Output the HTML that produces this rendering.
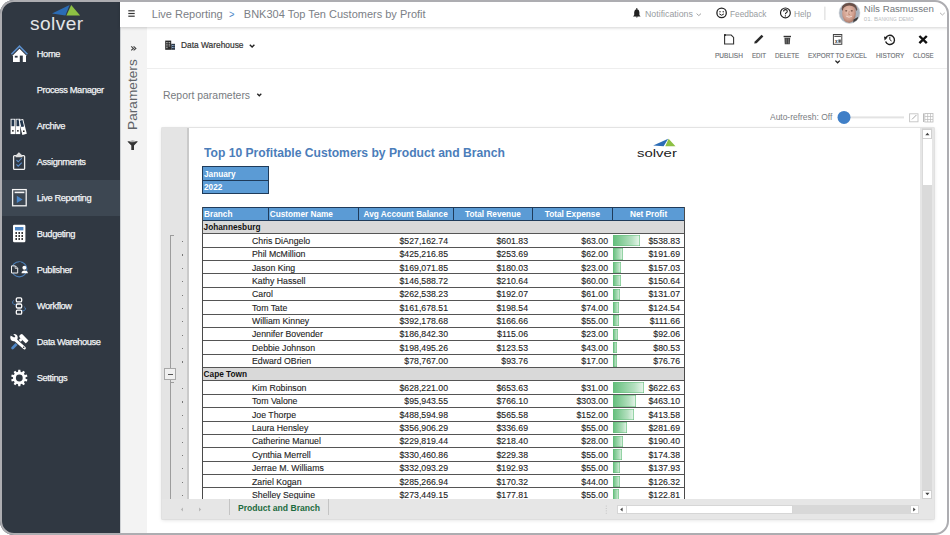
<!DOCTYPE html>
<html><head><meta charset="utf-8">
<style>
*{box-sizing:border-box;margin:0;padding:0}
html,body{width:950px;height:535px;overflow:hidden;background:#fff;font-family:"Liberation Sans",sans-serif}
.abs{position:absolute}
.t{position:absolute;white-space:nowrap}
#frame{position:absolute;left:0;top:0;width:949.3px;height:534.8px;border-radius:14px;overflow:hidden;background:#fff}
#bord{position:absolute;left:0;top:0;width:949.3px;height:534.8px;border:2.5px solid #adadb1;border-radius:14px;z-index:100}
#side{position:absolute;left:0;top:0;width:120px;height:535px;background:#303842}
.nav{position:absolute;left:0;width:120px;height:36px;color:#f2f4f6;font-size:9.3px;letter-spacing:-0.4px;-webkit-text-stroke:0.25px #f2f4f6}
.nav span{position:absolute;left:36.8px;top:13px;line-height:10px}
.nav svg{position:absolute;left:7px;top:8px}
#top{position:absolute;left:120px;top:0;width:830px;height:27px;background:#fff;box-shadow:0 1px 3px rgba(0,0,0,0.18);z-index:3}
#params{position:absolute;left:120px;top:25px;width:27px;height:510px;background:#f3f3f3}
#main{position:absolute;left:147px;top:25px;width:803px;height:510px;background:#fff}
</style></head><body>
<div id="frame">
 <div id="side">

  <svg class="abs" style="z-index:2;left:0;top:0" style="left:0;top:0" width="120" height="535" viewBox="0 0 120 535">
   <!-- logo -->
   <polygon points="52,13.6 69.6,5.1 65.4,15.4" fill="#2b6cb5"/>
   <polygon points="66.4,15.4 71.2,5.1 80.1,15.4" fill="#8dc043"/>
   <!-- home -->
   <polyline points="11.4,54.3 19.5,46.2 27.4,54.3" fill="none" stroke="#5b8ecb" stroke-width="1.6"/>
   <path d="M13,55.2 L19.5,48.8 L26,55.2 L26,62 L13,62Z" fill="#fff"/>
   <rect x="14.8" y="55.8" width="2.8" height="1.8" fill="#303842"/>
   <rect x="19.8" y="55.6" width="3" height="6.6" fill="#303842"/>
   <!-- archive -->
   <g>
    <rect x="10.6" y="118.8" width="4.6" height="15.3" fill="#fff"/>
    <rect x="15.6" y="118.8" width="4.6" height="15.3" fill="#fff"/>
    <rect x="11.5" y="119.6" width="2.8" height="6.6" fill="#22364d"/>
    <rect x="16.5" y="119.6" width="2.8" height="6.6" fill="#22364d"/>
    <circle cx="12.9" cy="130.8" r="0.85" fill="#111"/>
    <circle cx="17.9" cy="130.8" r="0.85" fill="#111"/>
    <g transform="rotate(-14 25 134)">
     <rect x="22.2" y="119" width="4.6" height="15.3" fill="#fff"/>
     <rect x="23.1" y="119.8" width="2.8" height="6.6" fill="#22364d"/>
     <circle cx="24.5" cy="131" r="0.85" fill="#111"/>
    </g>
   </g>
   <!-- assignments -->
   <rect x="13.6" y="155.6" width="11" height="13.8" rx="1" fill="none" stroke="#eee" stroke-width="1.3"/>
   <path d="M15.6,155.5 L18.9,152.3 L22.5,155.5 L22.5,157.2 L15.6,157.2Z" fill="#ddd"/>
   <polyline points="16.5,160 18.2,161.8 21.8,158.2" fill="none" stroke="#5b8ecb" stroke-width="1.1"/>
   <polyline points="16.5,164.4 18.2,166.2 21.8,162.6" fill="none" stroke="#5b8ecb" stroke-width="1.1"/>
   <!-- live reporting -->
   <rect x="12.6" y="189.6" width="13.6" height="16.2" fill="none" stroke="#f4f4f4" stroke-width="1.3"/>
   <rect x="14.6" y="191.6" width="9.8" height="1.6" fill="#f4f4f4"/>
   <polygon points="16.8,195.8 22.6,199.4 16.8,203" fill="#4a86c8"/>
   <!-- budgeting -->
   <rect x="13" y="224.8" width="12.4" height="17.4" rx="1.2" fill="#fff"/>
   <rect x="15" y="227" width="8.4" height="3.4" fill="#4f87c6"/>
   <g fill="#1b1b1b">
    <circle cx="16.2" cy="233" r="0.95"/><circle cx="19.2" cy="233" r="0.95"/><circle cx="22.2" cy="233" r="0.95"/>
    <circle cx="16.2" cy="236" r="0.95"/><circle cx="19.2" cy="236" r="0.95"/><circle cx="22.2" cy="236" r="0.95"/>
    <circle cx="16.2" cy="239" r="0.95"/><circle cx="19.2" cy="239" r="0.95"/><circle cx="22.2" cy="239" r="0.95"/>
   </g>
   <!-- publisher -->
   <circle cx="19.3" cy="269.3" r="7.6" fill="none" stroke="#4c7fb7" stroke-width="1.1"/>
   <path d="M11.5,265.9 L15.4,265.9 L17.7,268.2 L17.7,273 L11.5,273Z" fill="#303842" stroke="#f0f0f0" stroke-width="1"/><path d="M15.2,266 L15.2,268.4 L17.6,268.4" fill="none" stroke="#f0f0f0" stroke-width="0.8"/>
   <rect x="19.2" y="262" width="1.6" height="14" fill="#303842"/>
   <circle cx="24.4" cy="267.8" r="2" fill="#fff"/>
   <path d="M21.5,273.2 Q21.7,270.6 24.5,270.6 Q27.7,270.6 27.9,273.2Z" fill="#fff"/>
   <!-- workflow -->
   <path d="M13.8,300.5 A2,2 0 1 0 15.6,304.3" fill="none" stroke="#4c7fb7" stroke-width="1"/>
   <path d="M24.2,306.8 A2,2 0 1 1 22.3,310.6" fill="none" stroke="#4c7fb7" stroke-width="1"/>
   <g fill="none" stroke="#fff" stroke-width="1.3">
    <rect x="16.3" y="297.9" width="5.4" height="4" rx="1.2"/>
    <rect x="16.3" y="304" width="5.4" height="4" rx="1.2"/>
    <rect x="16.3" y="310.2" width="5.4" height="4" rx="1.2"/>
   </g>
   <!-- data warehouse -->
   <line x1="12.6" y1="348" x2="16.8" y2="343.8" stroke="#4f87c6" stroke-width="2.8" stroke-linecap="round"/>
   <line x1="16.8" y1="343.8" x2="21.6" y2="339" stroke="#fff" stroke-width="2.6"/>
   <g transform="rotate(45 23.8 338.6)"><rect x="19.2" y="336.6" width="9.4" height="4" rx="0.6" fill="#fff"/><rect x="18.6" y="337.2" width="1.6" height="2.8" fill="#fff"/></g>
   <line x1="15" y1="339.6" x2="24.4" y2="348" stroke="#303842" stroke-width="4.4"/>
   <line x1="15" y1="339.6" x2="24.4" y2="348" stroke="#fff" stroke-width="2.9" stroke-linecap="round"/>
   <circle cx="14" cy="337.6" r="3.7" fill="#fff"/>
   <path d="M10.4,335.4 L12.6,333.2 L15.4,336.4 L14.2,337.6Z" fill="#303842"/>
   <circle cx="23.7" cy="347.3" r="0.8" fill="#303842"/>
   <!-- settings -->
   <path d="M18.26,369.77 L20.34,369.77 L20.56,371.83 L21.91,372.27 L23.30,370.73 L24.98,371.95 L23.95,373.75 L24.78,374.90 L26.81,374.47 L27.45,376.44 L25.56,377.29 L25.56,378.71 L27.45,379.56 L26.81,381.53 L24.78,381.10 L23.95,382.25 L24.98,384.05 L23.30,385.27 L21.91,383.73 L20.56,384.17 L20.34,386.23 L18.26,386.23 L18.04,384.17 L16.69,383.73 L15.30,385.27 L13.62,384.05 L14.65,382.25 L13.82,381.10 L11.79,381.53 L11.15,379.56 L13.04,378.71 L13.04,377.29 L11.15,376.44 L11.79,374.47 L13.82,374.90 L14.65,373.75 L13.62,371.95 L15.30,370.73 L16.69,372.27 L18.04,371.83Z" fill="#fff"/>
   <circle cx="19.3" cy="378" r="3.4" fill="#303842"/>
  </svg>
  <div class="abs" style="left:30.3px;top:15.2px;font-size:18px;color:#e4e6e8;letter-spacing:0.4px;line-height:18px;transform:scaleX(1.06);transform-origin:0 0">solver</div>
  <div class="nav" style="top:36px;"><span>Home</span></div>
  <div class="nav" style="top:72px;"><span>Process Manager</span></div>
  <div class="nav" style="top:108px;"><span>Archive</span></div>
  <div class="nav" style="top:144px;"><span>Assignments</span></div>
  <div class="nav" style="top:180px;background:#3d4752;"><span>Live Reporting</span></div>
  <div class="nav" style="top:216px;"><span>Budgeting</span></div>
  <div class="nav" style="top:252px;"><span>Publisher</span></div>
  <div class="nav" style="top:288px;"><span>Workflow</span></div>
  <div class="nav" style="top:324px;"><span>Data Warehouse</span></div>
  <div class="nav" style="top:360px;"><span>Settings</span></div>
 </div>
 <div id="top"></div>
<div id="topc" class="abs" style="left:0;top:0;z-index:4">
<div class="t" style="left:151.8px;top:8.6px;font-size:11px;line-height:11px;color:#7b8086">Live Reporting</div>
<div class="t" style="left:229.4px;top:8.6px;font-size:11px;line-height:11px;color:#4a86c8;transform:scaleX(0.85);transform-origin:0 0">&gt;</div>
<div class="t" style="left:243.8px;top:8.6px;font-size:11px;line-height:11px;color:#7b8086">BNK304 Top Ten Customers by Profit</div>
<div class="t" style="left:645px;top:8.96px;font-size:9.5px;line-height:9.5px;transform:scaleX(0.926);transform-origin:0 0;color:#989ca1">Notifications</div>
<div class="t" style="left:730px;top:8.96px;font-size:9.5px;line-height:9.5px;transform:scaleX(0.874);transform-origin:0 0;color:#989ca1">Feedback</div>
<div class="t" style="left:794px;top:8.96px;font-size:9.5px;line-height:9.5px;transform:scaleX(0.874);transform-origin:0 0;color:#989ca1">Help</div>
<div class="t" style="left:863.8px;top:4.39px;font-size:9.7px;line-height:9.7px;color:#74787d">Nils Rasmussen</div>
<div class="t" style="left:863.8px;top:16.25px;font-size:6.2px;line-height:6.2px;color:#b9bcc0">01. B<span style="font-size:4.8px">ANKING</span> D<span style="font-size:4.8px">EMO</span></div>
<svg class="abs" style="left:0;top:0;z-index:4" width="950" height="30" viewBox="0 0 950 30">
 <g fill="#333"><rect x="128.3" y="10.2" width="6.4" height="1.2"/><rect x="128.3" y="12.9" width="6.4" height="1.2"/><rect x="128.3" y="15.6" width="6.4" height="1.2"/></g>
 <path d="M633,16.6 L640.6,16.6 L639.4,15 L639.4,12 Q639.2,9.4 636.8,9 Q634.4,9.4 634.2,12 L634.2,15Z M635.6,16.8 Q636.8,18.4 638,16.8Z" fill="#222"/>
 <rect x="636.3" y="8" width="1" height="1.4" fill="#222"/>
 <polyline points="696.6,13.6 698.8,15.6 701,13.6" fill="none" stroke="#999" stroke-width="0.9"/>
 <circle cx="721.6" cy="12.9" r="4.7" fill="none" stroke="#222" stroke-width="1.3"/>
 <circle cx="720" cy="11.7" r="0.7" fill="#222"/><circle cx="723.2" cy="11.7" r="0.7" fill="#222"/>
 <path d="M719.3,13.9 Q721.6,16.6 723.9,13.9" fill="none" stroke="#222" stroke-width="1"/>
 <circle cx="785.4" cy="12.9" r="4.9" fill="none" stroke="#222" stroke-width="1.2"/>
 <path d="M783.6,11.6 Q783.6,9.6 785.5,9.6 Q787.3,9.6 787.3,11.3 Q787.3,12.4 786,13 Q785.4,13.4 785.4,14.2" fill="none" stroke="#222" stroke-width="1.1"/>
 <circle cx="785.4" cy="15.9" r="0.7" fill="#222"/>
 <rect x="824.4" y="6.6" width="1" height="13.4" fill="#d6d6d6"/>
 <defs><clipPath id="avc"><circle cx="849.5" cy="12.9" r="10.5"/></clipPath><radialGradient id="fg" cx="45%" cy="40%" r="60%"><stop offset="0" stop-color="#e8c2b2"/><stop offset="0.7" stop-color="#cf9d8c"/><stop offset="1" stop-color="#a77868"/></radialGradient></defs>
 <g clip-path="url(#avc)">
  <rect x="838" y="2" width="23" height="22" fill="#a9b2bd"/>
  <ellipse cx="849" cy="13.4" rx="6.8" ry="9.6" fill="url(#fg)"/>
  <path d="M841.6,9 Q842,3 849,2.6 Q856.4,2.6 857.4,9.6 L856.2,11 Q855.6,6 849.2,5.6 Q843.4,5.8 842.6,11Z" fill="#6a5048"/>
  <ellipse cx="846.2" cy="10.8" rx="1.1" ry="0.6" fill="#5a3c34"/>
  <ellipse cx="851.8" cy="10.8" rx="1.1" ry="0.6" fill="#5a3c34"/>
  <path d="M849.2,11 L848.6,14.4 L850,14.6" fill="none" stroke="#b07a68" stroke-width="0.6"/>
  <path d="M846.2,16.2 Q849,18.2 852,16.2" fill="none" stroke="#f2ded6" stroke-width="0.9"/>
  <path d="M853.6,19.6 L858,17 L860,24 L853,24Z" fill="#3a3a3a"/>
 </g>
 <circle cx="849.5" cy="12.9" r="10.5" fill="none" stroke="#d0d4d8" stroke-width="0.5"/>
 <polyline points="940,12.8 942.4,15 944.8,12.8" fill="none" stroke="#aaa" stroke-width="0.9"/>
</svg>
</div>
 <div id="params"></div>
 <div id="main"></div>
<div id="mainc" class="abs" style="left:0;top:0;z-index:2">
<div class="t" style="left:126.3px;top:130.3px;font-size:13.7px;line-height:13.7px;color:#5f6368;transform:rotate(-90deg);transform-origin:0 0;">Parameters</div>
<div class="abs" style="left:120px;top:26px;width:1.2px;height:509px;background:#cdd0d3"></div>
<div class="t" style="left:180.5px;top:40.85px;font-size:8.8px;line-height:8.8px;transform:scaleX(0.951);transform-origin:0 0;color:#333;-webkit-text-stroke:0.2px #333">Data Warehouse</div>
<div class="t" style="left:715px;top:51.57px;font-size:7.6px;line-height:7.6px;transform:scaleX(0.858);transform-origin:0 0;color:#6d7075;-webkit-text-stroke:0.15px #6d7075">PUBLISH</div>
<div class="t" style="left:751.8px;top:51.57px;font-size:7.6px;line-height:7.6px;transform:scaleX(0.809);transform-origin:0 0;color:#6d7075;-webkit-text-stroke:0.15px #6d7075">EDIT</div>
<div class="t" style="left:775px;top:51.57px;font-size:7.6px;line-height:7.6px;transform:scaleX(0.818);transform-origin:0 0;color:#6d7075;-webkit-text-stroke:0.15px #6d7075">DELETE</div>
<div class="t" style="left:807.9px;top:51.57px;font-size:7.6px;line-height:7.6px;transform:scaleX(0.837);transform-origin:0 0;color:#6d7075;-webkit-text-stroke:0.15px #6d7075">EXPORT TO EXCEL</div>
<div class="t" style="left:875.8px;top:51.57px;font-size:7.6px;line-height:7.6px;transform:scaleX(0.842);transform-origin:0 0;color:#6d7075;-webkit-text-stroke:0.15px #6d7075">HISTORY</div>
<div class="t" style="left:912.6px;top:51.57px;font-size:7.6px;line-height:7.6px;transform:scaleX(0.799);transform-origin:0 0;color:#6d7075;-webkit-text-stroke:0.15px #6d7075">CLOSE</div>
<div class="t" style="left:163.1px;top:89.95px;font-size:11.4px;line-height:11.4px;transform:scaleX(0.917);transform-origin:0 0;color:#777b80">Report parameters</div>
<div class="t" style="left:769.7px;top:111.87px;font-size:9.6px;line-height:9.6px;transform:scaleX(0.88);transform-origin:0 0;color:#7a7e83">Auto-refresh: Off</div>
<svg class="abs" style="left:0;top:0;z-index:2" width="950" height="160" viewBox="0 0 950 160">
 <!-- >> -->
 <polyline points="131.2,46.4 133.4,48.4 131.2,50.4" fill="none" stroke="#444" stroke-width="1.2"/>
 <polyline points="133.6,46.4 135.8,48.4 133.6,50.4" fill="none" stroke="#444" stroke-width="1.2"/>
 <!-- funnel -->
 <path d="M127.4,141.6 Q132.6,140 137.9,141.6 L134,145.6 L134,149.9 L131.3,149.9 L131.3,145.6Z" fill="#333"/><ellipse cx="132.6" cy="141.5" rx="3.4" ry="0.7" fill="#aaa"/>
 <!-- building -->
 <rect x="165.2" y="40.6" width="6" height="9.2" fill="#2a2a2a"/>
 <g fill="#dcdcdc"><rect x="166.1" y="42" width="1.6" height="0.7"/><rect x="168.6" y="42" width="1.6" height="0.7"/><rect x="166.1" y="43.8" width="1.6" height="0.7"/><rect x="168.6" y="43.8" width="1.6" height="0.7"/><rect x="166.1" y="45.6" width="1.6" height="0.7"/><rect x="168.6" y="45.6" width="1.6" height="0.7"/><rect x="166.1" y="47.4" width="1.6" height="0.7"/></g>
 <rect x="171.2" y="43.8" width="3.8" height="6" fill="#303a46"/>
 <g fill="#8fb0d6"><rect x="171.9" y="45" width="1" height="1"/><rect x="173.4" y="45" width="1" height="1"/><rect x="171.9" y="47" width="1" height="1"/><rect x="173.4" y="47" width="1" height="1"/></g>
 <polyline points="249.8,44.8 252.1,47.1 254.4,44.8" fill="none" stroke="#222" stroke-width="1.4"/>
 <!-- publish -->
 <path d="M724.6,35 L731.2,35 L733.6,37.4 L733.6,44 L724.6,44Z" fill="none" stroke="#333" stroke-width="1.1"/>
 <circle cx="725" cy="35" r="1" fill="#222"/>
 <!-- edit -->
 <path d="M754.2,43.6 L754.8,41.4 L761.6,34.8 L763.4,36.6 L756.6,43.2Z" fill="#2a2a2a"/>
 <!-- delete -->
 <rect x="783.6" y="35.8" width="7.4" height="1.4" fill="#333"/>
 <path d="M784.4,37.8 L790.2,37.8 L789.8,44.3 L784.8,44.3Z" fill="#444"/>
 <g fill="#999"><rect x="785.9" y="38.6" width="0.5" height="5"/><rect x="788" y="38.6" width="0.5" height="5"/></g>
 <!-- excel -->
 <rect x="833.4" y="34.5" width="8.4" height="9.8" fill="#fff" stroke="#444" stroke-width="1"/>
 <rect x="834.3" y="35.8" width="6.6" height="1.1" fill="#444"/>
 <text x="835" y="42.6" font-size="4.8" font-family="Liberation Sans" font-weight="bold" fill="#333">x</text>
 <rect x="838.4" y="39.5" width="2.4" height="3.2" fill="#555"/>
 <polyline points="835.4,60.6 837.6,62.8 839.8,60.6" fill="none" stroke="#222" stroke-width="1.3"/>
 <!-- history -->
 <path d="M885.8,37.8 A4.6,4.6 0 1 1 885.6,41.6" fill="none" stroke="#1e1e1e" stroke-width="1.4"/>
 <polygon points="884,36.4 887.6,37.6 884.6,40.4" fill="#1e1e1e"/>
 <polyline points="889.8,36.8 889.8,39.6 891.6,41" fill="none" stroke="#1e1e1e" stroke-width="1"/>
 <!-- close -->
 <path d="M919.4,36 L926.8,43.2 M926.8,36 L919.4,43.2" stroke="#111" stroke-width="2.4"/>
 <!-- toggle -->
 <rect x="844" y="116.4" width="60" height="2" fill="#e3e3e3"/>
 <circle cx="844" cy="117.4" r="6.5" fill="#3f7fc7"/>
 <!-- icons -->
 <rect x="909.6" y="113.8" width="8.4" height="8" fill="none" stroke="#c4c4c4" stroke-width="0.9"/>
 <path d="M912,119.4 L916.4,115" stroke="#aaa" stroke-width="1"/>
 <g fill="#bbb"><rect x="923" y="113.4" width="1" height="8.6"/>
 <rect x="924.8" y="113.4" width="8.2" height="8.6" fill="none" stroke="#bbb" stroke-width="0.8"/>
 <rect x="924.8" y="116.2" width="8.2" height="0.7"/><rect x="924.8" y="119" width="8.2" height="0.7"/>
 <rect x="927.4" y="113.4" width="0.7" height="8.6"/><rect x="930" y="113.4" width="0.7" height="8.6"/></g>
 <polyline points="257.3,93.8 259.3,95.8 261.3,93.8" fill="none" stroke="#222" stroke-width="1.3"/>
</svg>
<div class="abs" style="left:147px;top:68px;width:803px;height:1px;background:#eeeeee"></div>
</div>
<div id="sheetc" class="abs" style="left:0;top:0;z-index:1"><!--SHEET-->
<div class="abs" style="left:162px;top:128.2px;width:771.5px;height:390.8px;background:#e6e6e6;box-shadow:0 0 0 0.6px #d6d6d6,0 1px 4px rgba(0,0,0,0.14)"></div>
<div class="abs" style="left:162px;top:128.2px;width:25.4px;height:370.8px;background:#e4e4e4"></div>
<div class="abs" style="left:187.2px;top:128.2px;width:1.4px;height:370.8px;background:#cacaca"></div>
<div class="abs" style="left:170.2px;top:235.1px;width:0.9px;height:133.3px;background:#9c9c9c"></div>
<div class="abs" style="left:170.2px;top:235.1px;width:4px;height:0.9px;background:#9c9c9c"></div>
<div class="abs" style="left:170.2px;top:380.4px;width:0.9px;height:119px;background:#9c9c9c"></div>
<div class="abs" style="left:170.2px;top:381.8px;width:4px;height:0.9px;background:#9c9c9c"></div>
<div class="abs" style="left:164.2px;top:368.4px;width:11.8px;height:12px;background:#f0f0f0;border:0.9px solid #a8a8a8"></div>
<div class="abs" style="left:167.6px;top:373.9px;width:5.2px;height:1.1px;background:#555"></div>
<div class="abs" style="left:181.6px;top:241.03px;width:1.2px;height:1.2px;background:#777"></div>
<div class="abs" style="left:181.6px;top:254.39px;width:1.2px;height:1.2px;background:#777"></div>
<div class="abs" style="left:181.6px;top:267.76px;width:1.2px;height:1.2px;background:#777"></div>
<div class="abs" style="left:181.6px;top:281.13px;width:1.2px;height:1.2px;background:#777"></div>
<div class="abs" style="left:181.6px;top:294.50px;width:1.2px;height:1.2px;background:#777"></div>
<div class="abs" style="left:181.6px;top:307.88px;width:1.2px;height:1.2px;background:#777"></div>
<div class="abs" style="left:181.6px;top:321.25px;width:1.2px;height:1.2px;background:#777"></div>
<div class="abs" style="left:181.6px;top:334.62px;width:1.2px;height:1.2px;background:#777"></div>
<div class="abs" style="left:181.6px;top:347.98px;width:1.2px;height:1.2px;background:#777"></div>
<div class="abs" style="left:181.6px;top:361.35px;width:1.2px;height:1.2px;background:#777"></div>
<div class="abs" style="left:181.6px;top:388.09px;width:1.2px;height:1.2px;background:#777"></div>
<div class="abs" style="left:181.6px;top:401.46px;width:1.2px;height:1.2px;background:#777"></div>
<div class="abs" style="left:181.6px;top:414.83px;width:1.2px;height:1.2px;background:#777"></div>
<div class="abs" style="left:181.6px;top:428.20px;width:1.2px;height:1.2px;background:#777"></div>
<div class="abs" style="left:181.6px;top:441.57px;width:1.2px;height:1.2px;background:#777"></div>
<div class="abs" style="left:181.6px;top:454.94px;width:1.2px;height:1.2px;background:#777"></div>
<div class="abs" style="left:181.6px;top:468.31px;width:1.2px;height:1.2px;background:#777"></div>
<div class="abs" style="left:181.6px;top:481.69px;width:1.2px;height:1.2px;background:#777"></div>
<div class="abs" style="left:181.6px;top:495.06px;width:1.2px;height:1.2px;background:#777"></div>
<div class="abs" style="left:188.6px;top:128.2px;width:731.3px;height:370.8px;background:#fff;overflow:hidden">
<div class="abs" style="left:-188.6px;top:-128.2px;width:950px;height:535px">
<div class="abs" style="left:202.2px;top:207.10px;width:482.60px;height:13.37px;background:#5b9bd5"></div>
<div class="abs" style="left:267.90px;top:207.10px;width:1.1px;height:13.37px;background:#1f3b5a"></div>
<div class="abs" style="left:358.00px;top:207.10px;width:1.1px;height:13.37px;background:#1f3b5a"></div>
<div class="abs" style="left:452.70px;top:207.10px;width:1.1px;height:13.37px;background:#1f3b5a"></div>
<div class="abs" style="left:532.30px;top:207.10px;width:1.1px;height:13.37px;background:#1f3b5a"></div>
<div class="abs" style="left:612.20px;top:207.10px;width:1.1px;height:13.37px;background:#1f3b5a"></div>
<div class="t" style="left:204.00px;top:210.92px;font-size:8.25px;line-height:8.25px;color:#fff;font-weight:bold">Branch</div>
<div class="t" style="left:269.70px;top:210.92px;font-size:8.25px;line-height:8.25px;color:#fff;font-weight:bold">Customer Name</div>
<div class="t" style="left:247.80px;width:200px;text-align:right;top:210.92px;font-size:8.25px;line-height:8.25px;color:#fff;font-weight:bold">Avg Account Balance</div>
<div class="t" style="left:392.90px;width:200px;text-align:center;top:210.92px;font-size:8.25px;line-height:8.25px;color:#fff;font-weight:bold">Total Revenue</div>
<div class="t" style="left:472.40px;width:200px;text-align:center;top:210.92px;font-size:8.25px;line-height:8.25px;color:#fff;font-weight:bold">Total Expense</div>
<div class="t" style="left:548.60px;width:200px;text-align:center;top:210.92px;font-size:8.25px;line-height:8.25px;color:#fff;font-weight:bold">Net Profit</div>
<div class="abs" style="left:202.2px;top:220.47px;width:482.60px;height:13.37px;background:#d9d9d9"></div>
<div class="t" style="left:203.60px;top:224.29px;font-size:8.25px;line-height:8.25px;color:#111;font-weight:bold">Johannesburg</div>
<div class="abs" style="left:613.4px;top:235.04px;width:26.40px;height:11.17px;background:linear-gradient(90deg,#63be7b,#b5e0c0 70%,#eaf6ed);box-shadow:inset 0 0 0 0.6px #63be7b"></div>
<div class="t" style="left:251.80px;top:236.85px;font-size:9.2px;line-height:9.2px;transform:scaleX(0.95);transform-origin:0 0;color:#1e1e1e;-webkit-text-stroke:0.12px #1e1e1e">Chris DiAngelo</div>
<div class="t" style="left:247.90px;width:200px;text-align:right;top:236.85px;font-size:9.2px;line-height:9.2px;transform:scaleX(0.95);transform-origin:100% 0;color:#1e1e1e;-webkit-text-stroke:0.12px #1e1e1e">$527,162.74</div>
<div class="t" style="left:327.70px;width:200px;text-align:right;top:236.85px;font-size:9.2px;line-height:9.2px;transform:scaleX(0.95);transform-origin:100% 0;color:#1e1e1e;-webkit-text-stroke:0.12px #1e1e1e">$601.83</div>
<div class="t" style="left:407.60px;width:200px;text-align:right;top:236.85px;font-size:9.2px;line-height:9.2px;transform:scaleX(0.95);transform-origin:100% 0;color:#1e1e1e;-webkit-text-stroke:0.12px #1e1e1e">$63.00</div>
<div class="t" style="left:480.30px;width:200px;text-align:right;top:236.85px;font-size:9.2px;line-height:9.2px;transform:scaleX(0.95);transform-origin:100% 0;color:#1e1e1e;-webkit-text-stroke:0.12px #1e1e1e">$538.83</div>
<div class="abs" style="left:613.4px;top:248.41px;width:9.39px;height:11.17px;background:linear-gradient(90deg,#63be7b,#b5e0c0 70%,#eaf6ed);box-shadow:inset 0 0 0 0.6px #63be7b"></div>
<div class="t" style="left:251.80px;top:250.22px;font-size:9.2px;line-height:9.2px;transform:scaleX(0.95);transform-origin:0 0;color:#1e1e1e;-webkit-text-stroke:0.12px #1e1e1e">Phil McMillion</div>
<div class="t" style="left:247.90px;width:200px;text-align:right;top:250.22px;font-size:9.2px;line-height:9.2px;transform:scaleX(0.95);transform-origin:100% 0;color:#1e1e1e;-webkit-text-stroke:0.12px #1e1e1e">$425,216.85</div>
<div class="t" style="left:327.70px;width:200px;text-align:right;top:250.22px;font-size:9.2px;line-height:9.2px;transform:scaleX(0.95);transform-origin:100% 0;color:#1e1e1e;-webkit-text-stroke:0.12px #1e1e1e">$253.69</div>
<div class="t" style="left:407.60px;width:200px;text-align:right;top:250.22px;font-size:9.2px;line-height:9.2px;transform:scaleX(0.95);transform-origin:100% 0;color:#1e1e1e;-webkit-text-stroke:0.12px #1e1e1e">$62.00</div>
<div class="t" style="left:480.30px;width:200px;text-align:right;top:250.22px;font-size:9.2px;line-height:9.2px;transform:scaleX(0.95);transform-origin:100% 0;color:#1e1e1e;-webkit-text-stroke:0.12px #1e1e1e">$191.69</div>
<div class="abs" style="left:613.4px;top:261.78px;width:7.69px;height:11.17px;background:linear-gradient(90deg,#63be7b,#b5e0c0 70%,#eaf6ed);box-shadow:inset 0 0 0 0.6px #63be7b"></div>
<div class="t" style="left:251.80px;top:263.59px;font-size:9.2px;line-height:9.2px;transform:scaleX(0.95);transform-origin:0 0;color:#1e1e1e;-webkit-text-stroke:0.12px #1e1e1e">Jason King</div>
<div class="t" style="left:247.90px;width:200px;text-align:right;top:263.59px;font-size:9.2px;line-height:9.2px;transform:scaleX(0.95);transform-origin:100% 0;color:#1e1e1e;-webkit-text-stroke:0.12px #1e1e1e">$169,071.85</div>
<div class="t" style="left:327.70px;width:200px;text-align:right;top:263.59px;font-size:9.2px;line-height:9.2px;transform:scaleX(0.95);transform-origin:100% 0;color:#1e1e1e;-webkit-text-stroke:0.12px #1e1e1e">$180.03</div>
<div class="t" style="left:407.60px;width:200px;text-align:right;top:263.59px;font-size:9.2px;line-height:9.2px;transform:scaleX(0.95);transform-origin:100% 0;color:#1e1e1e;-webkit-text-stroke:0.12px #1e1e1e">$23.00</div>
<div class="t" style="left:480.30px;width:200px;text-align:right;top:263.59px;font-size:9.2px;line-height:9.2px;transform:scaleX(0.95);transform-origin:100% 0;color:#1e1e1e;-webkit-text-stroke:0.12px #1e1e1e">$157.03</div>
<div class="abs" style="left:613.4px;top:275.15px;width:7.38px;height:11.17px;background:linear-gradient(90deg,#63be7b,#b5e0c0 70%,#eaf6ed);box-shadow:inset 0 0 0 0.6px #63be7b"></div>
<div class="t" style="left:251.80px;top:276.96px;font-size:9.2px;line-height:9.2px;transform:scaleX(0.95);transform-origin:0 0;color:#1e1e1e;-webkit-text-stroke:0.12px #1e1e1e">Kathy Hassell</div>
<div class="t" style="left:247.90px;width:200px;text-align:right;top:276.96px;font-size:9.2px;line-height:9.2px;transform:scaleX(0.95);transform-origin:100% 0;color:#1e1e1e;-webkit-text-stroke:0.12px #1e1e1e">$146,588.72</div>
<div class="t" style="left:327.70px;width:200px;text-align:right;top:276.96px;font-size:9.2px;line-height:9.2px;transform:scaleX(0.95);transform-origin:100% 0;color:#1e1e1e;-webkit-text-stroke:0.12px #1e1e1e">$210.64</div>
<div class="t" style="left:407.60px;width:200px;text-align:right;top:276.96px;font-size:9.2px;line-height:9.2px;transform:scaleX(0.95);transform-origin:100% 0;color:#1e1e1e;-webkit-text-stroke:0.12px #1e1e1e">$60.00</div>
<div class="t" style="left:480.30px;width:200px;text-align:right;top:276.96px;font-size:9.2px;line-height:9.2px;transform:scaleX(0.95);transform-origin:100% 0;color:#1e1e1e;-webkit-text-stroke:0.12px #1e1e1e">$150.64</div>
<div class="abs" style="left:613.4px;top:288.52px;width:6.42px;height:11.17px;background:linear-gradient(90deg,#63be7b,#b5e0c0 70%,#eaf6ed);box-shadow:inset 0 0 0 0.6px #63be7b"></div>
<div class="t" style="left:251.80px;top:290.33px;font-size:9.2px;line-height:9.2px;transform:scaleX(0.95);transform-origin:0 0;color:#1e1e1e;-webkit-text-stroke:0.12px #1e1e1e">Carol</div>
<div class="t" style="left:247.90px;width:200px;text-align:right;top:290.33px;font-size:9.2px;line-height:9.2px;transform:scaleX(0.95);transform-origin:100% 0;color:#1e1e1e;-webkit-text-stroke:0.12px #1e1e1e">$262,538.23</div>
<div class="t" style="left:327.70px;width:200px;text-align:right;top:290.33px;font-size:9.2px;line-height:9.2px;transform:scaleX(0.95);transform-origin:100% 0;color:#1e1e1e;-webkit-text-stroke:0.12px #1e1e1e">$192.07</div>
<div class="t" style="left:407.60px;width:200px;text-align:right;top:290.33px;font-size:9.2px;line-height:9.2px;transform:scaleX(0.95);transform-origin:100% 0;color:#1e1e1e;-webkit-text-stroke:0.12px #1e1e1e">$61.00</div>
<div class="t" style="left:480.30px;width:200px;text-align:right;top:290.33px;font-size:9.2px;line-height:9.2px;transform:scaleX(0.95);transform-origin:100% 0;color:#1e1e1e;-webkit-text-stroke:0.12px #1e1e1e">$131.07</div>
<div class="abs" style="left:613.4px;top:301.89px;width:6.10px;height:11.17px;background:linear-gradient(90deg,#63be7b,#b5e0c0 70%,#eaf6ed);box-shadow:inset 0 0 0 0.6px #63be7b"></div>
<div class="t" style="left:251.80px;top:303.70px;font-size:9.2px;line-height:9.2px;transform:scaleX(0.95);transform-origin:0 0;color:#1e1e1e;-webkit-text-stroke:0.12px #1e1e1e">Tom Tate</div>
<div class="t" style="left:247.90px;width:200px;text-align:right;top:303.70px;font-size:9.2px;line-height:9.2px;transform:scaleX(0.95);transform-origin:100% 0;color:#1e1e1e;-webkit-text-stroke:0.12px #1e1e1e">$161,678.51</div>
<div class="t" style="left:327.70px;width:200px;text-align:right;top:303.70px;font-size:9.2px;line-height:9.2px;transform:scaleX(0.95);transform-origin:100% 0;color:#1e1e1e;-webkit-text-stroke:0.12px #1e1e1e">$198.54</div>
<div class="t" style="left:407.60px;width:200px;text-align:right;top:303.70px;font-size:9.2px;line-height:9.2px;transform:scaleX(0.95);transform-origin:100% 0;color:#1e1e1e;-webkit-text-stroke:0.12px #1e1e1e">$74.00</div>
<div class="t" style="left:480.30px;width:200px;text-align:right;top:303.70px;font-size:9.2px;line-height:9.2px;transform:scaleX(0.95);transform-origin:100% 0;color:#1e1e1e;-webkit-text-stroke:0.12px #1e1e1e">$124.54</div>
<div class="abs" style="left:613.4px;top:315.26px;width:5.47px;height:11.17px;background:linear-gradient(90deg,#63be7b,#b5e0c0 70%,#eaf6ed);box-shadow:inset 0 0 0 0.6px #63be7b"></div>
<div class="t" style="left:251.80px;top:317.07px;font-size:9.2px;line-height:9.2px;transform:scaleX(0.95);transform-origin:0 0;color:#1e1e1e;-webkit-text-stroke:0.12px #1e1e1e">William Kinney</div>
<div class="t" style="left:247.90px;width:200px;text-align:right;top:317.07px;font-size:9.2px;line-height:9.2px;transform:scaleX(0.95);transform-origin:100% 0;color:#1e1e1e;-webkit-text-stroke:0.12px #1e1e1e">$392,178.68</div>
<div class="t" style="left:327.70px;width:200px;text-align:right;top:317.07px;font-size:9.2px;line-height:9.2px;transform:scaleX(0.95);transform-origin:100% 0;color:#1e1e1e;-webkit-text-stroke:0.12px #1e1e1e">$166.66</div>
<div class="t" style="left:407.60px;width:200px;text-align:right;top:317.07px;font-size:9.2px;line-height:9.2px;transform:scaleX(0.95);transform-origin:100% 0;color:#1e1e1e;-webkit-text-stroke:0.12px #1e1e1e">$55.00</div>
<div class="t" style="left:480.30px;width:200px;text-align:right;top:317.07px;font-size:9.2px;line-height:9.2px;transform:scaleX(0.95);transform-origin:100% 0;color:#1e1e1e;-webkit-text-stroke:0.12px #1e1e1e">$111.66</div>
<div class="abs" style="left:613.4px;top:328.63px;width:4.51px;height:11.17px;background:linear-gradient(90deg,#63be7b,#b5e0c0 70%,#eaf6ed);box-shadow:inset 0 0 0 0.6px #63be7b"></div>
<div class="t" style="left:251.80px;top:330.44px;font-size:9.2px;line-height:9.2px;transform:scaleX(0.95);transform-origin:0 0;color:#1e1e1e;-webkit-text-stroke:0.12px #1e1e1e">Jennifer Bovender</div>
<div class="t" style="left:247.90px;width:200px;text-align:right;top:330.44px;font-size:9.2px;line-height:9.2px;transform:scaleX(0.95);transform-origin:100% 0;color:#1e1e1e;-webkit-text-stroke:0.12px #1e1e1e">$186,842.30</div>
<div class="t" style="left:327.70px;width:200px;text-align:right;top:330.44px;font-size:9.2px;line-height:9.2px;transform:scaleX(0.95);transform-origin:100% 0;color:#1e1e1e;-webkit-text-stroke:0.12px #1e1e1e">$115.06</div>
<div class="t" style="left:407.60px;width:200px;text-align:right;top:330.44px;font-size:9.2px;line-height:9.2px;transform:scaleX(0.95);transform-origin:100% 0;color:#1e1e1e;-webkit-text-stroke:0.12px #1e1e1e">$23.00</div>
<div class="t" style="left:480.30px;width:200px;text-align:right;top:330.44px;font-size:9.2px;line-height:9.2px;transform:scaleX(0.95);transform-origin:100% 0;color:#1e1e1e;-webkit-text-stroke:0.12px #1e1e1e">$92.06</div>
<div class="abs" style="left:613.4px;top:342.00px;width:3.95px;height:11.17px;background:linear-gradient(90deg,#63be7b,#b5e0c0 70%,#eaf6ed);box-shadow:inset 0 0 0 0.6px #63be7b"></div>
<div class="t" style="left:251.80px;top:343.81px;font-size:9.2px;line-height:9.2px;transform:scaleX(0.95);transform-origin:0 0;color:#1e1e1e;-webkit-text-stroke:0.12px #1e1e1e">Debbie Johnson</div>
<div class="t" style="left:247.90px;width:200px;text-align:right;top:343.81px;font-size:9.2px;line-height:9.2px;transform:scaleX(0.95);transform-origin:100% 0;color:#1e1e1e;-webkit-text-stroke:0.12px #1e1e1e">$198,495.26</div>
<div class="t" style="left:327.70px;width:200px;text-align:right;top:343.81px;font-size:9.2px;line-height:9.2px;transform:scaleX(0.95);transform-origin:100% 0;color:#1e1e1e;-webkit-text-stroke:0.12px #1e1e1e">$123.53</div>
<div class="t" style="left:407.60px;width:200px;text-align:right;top:343.81px;font-size:9.2px;line-height:9.2px;transform:scaleX(0.95);transform-origin:100% 0;color:#1e1e1e;-webkit-text-stroke:0.12px #1e1e1e">$43.00</div>
<div class="t" style="left:480.30px;width:200px;text-align:right;top:343.81px;font-size:9.2px;line-height:9.2px;transform:scaleX(0.95);transform-origin:100% 0;color:#1e1e1e;-webkit-text-stroke:0.12px #1e1e1e">$80.53</div>
<div class="abs" style="left:613.4px;top:355.37px;width:3.76px;height:11.17px;background:linear-gradient(90deg,#63be7b,#b5e0c0 70%,#eaf6ed);box-shadow:inset 0 0 0 0.6px #63be7b"></div>
<div class="t" style="left:251.80px;top:357.18px;font-size:9.2px;line-height:9.2px;transform:scaleX(0.95);transform-origin:0 0;color:#1e1e1e;-webkit-text-stroke:0.12px #1e1e1e">Edward OBrien</div>
<div class="t" style="left:247.90px;width:200px;text-align:right;top:357.18px;font-size:9.2px;line-height:9.2px;transform:scaleX(0.95);transform-origin:100% 0;color:#1e1e1e;-webkit-text-stroke:0.12px #1e1e1e">$78,767.00</div>
<div class="t" style="left:327.70px;width:200px;text-align:right;top:357.18px;font-size:9.2px;line-height:9.2px;transform:scaleX(0.95);transform-origin:100% 0;color:#1e1e1e;-webkit-text-stroke:0.12px #1e1e1e">$93.76</div>
<div class="t" style="left:407.60px;width:200px;text-align:right;top:357.18px;font-size:9.2px;line-height:9.2px;transform:scaleX(0.95);transform-origin:100% 0;color:#1e1e1e;-webkit-text-stroke:0.12px #1e1e1e">$17.00</div>
<div class="t" style="left:480.30px;width:200px;text-align:right;top:357.18px;font-size:9.2px;line-height:9.2px;transform:scaleX(0.95);transform-origin:100% 0;color:#1e1e1e;-webkit-text-stroke:0.12px #1e1e1e">$76.76</div>
<div class="abs" style="left:202.2px;top:367.54px;width:482.60px;height:13.37px;background:#d9d9d9"></div>
<div class="t" style="left:203.60px;top:371.36px;font-size:8.25px;line-height:8.25px;color:#111;font-weight:bold">Cape Town</div>
<div class="abs" style="left:613.4px;top:382.11px;width:30.51px;height:11.17px;background:linear-gradient(90deg,#63be7b,#b5e0c0 70%,#eaf6ed);box-shadow:inset 0 0 0 0.6px #63be7b"></div>
<div class="t" style="left:251.80px;top:383.92px;font-size:9.2px;line-height:9.2px;transform:scaleX(0.95);transform-origin:0 0;color:#1e1e1e;-webkit-text-stroke:0.12px #1e1e1e">Kim Robinson</div>
<div class="t" style="left:247.90px;width:200px;text-align:right;top:383.92px;font-size:9.2px;line-height:9.2px;transform:scaleX(0.95);transform-origin:100% 0;color:#1e1e1e;-webkit-text-stroke:0.12px #1e1e1e">$628,221.00</div>
<div class="t" style="left:327.70px;width:200px;text-align:right;top:383.92px;font-size:9.2px;line-height:9.2px;transform:scaleX(0.95);transform-origin:100% 0;color:#1e1e1e;-webkit-text-stroke:0.12px #1e1e1e">$653.63</div>
<div class="t" style="left:407.60px;width:200px;text-align:right;top:383.92px;font-size:9.2px;line-height:9.2px;transform:scaleX(0.95);transform-origin:100% 0;color:#1e1e1e;-webkit-text-stroke:0.12px #1e1e1e">$31.00</div>
<div class="t" style="left:480.30px;width:200px;text-align:right;top:383.92px;font-size:9.2px;line-height:9.2px;transform:scaleX(0.95);transform-origin:100% 0;color:#1e1e1e;-webkit-text-stroke:0.12px #1e1e1e">$622.63</div>
<div class="abs" style="left:613.4px;top:395.48px;width:22.69px;height:11.17px;background:linear-gradient(90deg,#63be7b,#b5e0c0 70%,#eaf6ed);box-shadow:inset 0 0 0 0.6px #63be7b"></div>
<div class="t" style="left:251.80px;top:397.29px;font-size:9.2px;line-height:9.2px;transform:scaleX(0.95);transform-origin:0 0;color:#1e1e1e;-webkit-text-stroke:0.12px #1e1e1e">Tom Valone</div>
<div class="t" style="left:247.90px;width:200px;text-align:right;top:397.29px;font-size:9.2px;line-height:9.2px;transform:scaleX(0.95);transform-origin:100% 0;color:#1e1e1e;-webkit-text-stroke:0.12px #1e1e1e">$95,943.55</div>
<div class="t" style="left:327.70px;width:200px;text-align:right;top:397.29px;font-size:9.2px;line-height:9.2px;transform:scaleX(0.95);transform-origin:100% 0;color:#1e1e1e;-webkit-text-stroke:0.12px #1e1e1e">$766.10</div>
<div class="t" style="left:407.60px;width:200px;text-align:right;top:397.29px;font-size:9.2px;line-height:9.2px;transform:scaleX(0.95);transform-origin:100% 0;color:#1e1e1e;-webkit-text-stroke:0.12px #1e1e1e">$303.00</div>
<div class="t" style="left:480.30px;width:200px;text-align:right;top:397.29px;font-size:9.2px;line-height:9.2px;transform:scaleX(0.95);transform-origin:100% 0;color:#1e1e1e;-webkit-text-stroke:0.12px #1e1e1e">$463.10</div>
<div class="abs" style="left:613.4px;top:408.85px;width:20.27px;height:11.17px;background:linear-gradient(90deg,#63be7b,#b5e0c0 70%,#eaf6ed);box-shadow:inset 0 0 0 0.6px #63be7b"></div>
<div class="t" style="left:251.80px;top:410.66px;font-size:9.2px;line-height:9.2px;transform:scaleX(0.95);transform-origin:0 0;color:#1e1e1e;-webkit-text-stroke:0.12px #1e1e1e">Joe Thorpe</div>
<div class="t" style="left:247.90px;width:200px;text-align:right;top:410.66px;font-size:9.2px;line-height:9.2px;transform:scaleX(0.95);transform-origin:100% 0;color:#1e1e1e;-webkit-text-stroke:0.12px #1e1e1e">$488,594.98</div>
<div class="t" style="left:327.70px;width:200px;text-align:right;top:410.66px;font-size:9.2px;line-height:9.2px;transform:scaleX(0.95);transform-origin:100% 0;color:#1e1e1e;-webkit-text-stroke:0.12px #1e1e1e">$565.58</div>
<div class="t" style="left:407.60px;width:200px;text-align:right;top:410.66px;font-size:9.2px;line-height:9.2px;transform:scaleX(0.95);transform-origin:100% 0;color:#1e1e1e;-webkit-text-stroke:0.12px #1e1e1e">$152.00</div>
<div class="t" style="left:480.30px;width:200px;text-align:right;top:410.66px;font-size:9.2px;line-height:9.2px;transform:scaleX(0.95);transform-origin:100% 0;color:#1e1e1e;-webkit-text-stroke:0.12px #1e1e1e">$413.58</div>
<div class="abs" style="left:613.4px;top:422.22px;width:13.80px;height:11.17px;background:linear-gradient(90deg,#63be7b,#b5e0c0 70%,#eaf6ed);box-shadow:inset 0 0 0 0.6px #63be7b"></div>
<div class="t" style="left:251.80px;top:424.03px;font-size:9.2px;line-height:9.2px;transform:scaleX(0.95);transform-origin:0 0;color:#1e1e1e;-webkit-text-stroke:0.12px #1e1e1e">Laura Hensley</div>
<div class="t" style="left:247.90px;width:200px;text-align:right;top:424.03px;font-size:9.2px;line-height:9.2px;transform:scaleX(0.95);transform-origin:100% 0;color:#1e1e1e;-webkit-text-stroke:0.12px #1e1e1e">$356,906.29</div>
<div class="t" style="left:327.70px;width:200px;text-align:right;top:424.03px;font-size:9.2px;line-height:9.2px;transform:scaleX(0.95);transform-origin:100% 0;color:#1e1e1e;-webkit-text-stroke:0.12px #1e1e1e">$336.69</div>
<div class="t" style="left:407.60px;width:200px;text-align:right;top:424.03px;font-size:9.2px;line-height:9.2px;transform:scaleX(0.95);transform-origin:100% 0;color:#1e1e1e;-webkit-text-stroke:0.12px #1e1e1e">$55.00</div>
<div class="t" style="left:480.30px;width:200px;text-align:right;top:424.03px;font-size:9.2px;line-height:9.2px;transform:scaleX(0.95);transform-origin:100% 0;color:#1e1e1e;-webkit-text-stroke:0.12px #1e1e1e">$281.69</div>
<div class="abs" style="left:613.4px;top:435.59px;width:9.33px;height:11.17px;background:linear-gradient(90deg,#63be7b,#b5e0c0 70%,#eaf6ed);box-shadow:inset 0 0 0 0.6px #63be7b"></div>
<div class="t" style="left:251.80px;top:437.40px;font-size:9.2px;line-height:9.2px;transform:scaleX(0.95);transform-origin:0 0;color:#1e1e1e;-webkit-text-stroke:0.12px #1e1e1e">Catherine Manuel</div>
<div class="t" style="left:247.90px;width:200px;text-align:right;top:437.40px;font-size:9.2px;line-height:9.2px;transform:scaleX(0.95);transform-origin:100% 0;color:#1e1e1e;-webkit-text-stroke:0.12px #1e1e1e">$229,819.44</div>
<div class="t" style="left:327.70px;width:200px;text-align:right;top:437.40px;font-size:9.2px;line-height:9.2px;transform:scaleX(0.95);transform-origin:100% 0;color:#1e1e1e;-webkit-text-stroke:0.12px #1e1e1e">$218.40</div>
<div class="t" style="left:407.60px;width:200px;text-align:right;top:437.40px;font-size:9.2px;line-height:9.2px;transform:scaleX(0.95);transform-origin:100% 0;color:#1e1e1e;-webkit-text-stroke:0.12px #1e1e1e">$28.00</div>
<div class="t" style="left:480.30px;width:200px;text-align:right;top:437.40px;font-size:9.2px;line-height:9.2px;transform:scaleX(0.95);transform-origin:100% 0;color:#1e1e1e;-webkit-text-stroke:0.12px #1e1e1e">$190.40</div>
<div class="abs" style="left:613.4px;top:448.96px;width:8.54px;height:11.17px;background:linear-gradient(90deg,#63be7b,#b5e0c0 70%,#eaf6ed);box-shadow:inset 0 0 0 0.6px #63be7b"></div>
<div class="t" style="left:251.80px;top:450.77px;font-size:9.2px;line-height:9.2px;transform:scaleX(0.95);transform-origin:0 0;color:#1e1e1e;-webkit-text-stroke:0.12px #1e1e1e">Cynthia Merrell</div>
<div class="t" style="left:247.90px;width:200px;text-align:right;top:450.77px;font-size:9.2px;line-height:9.2px;transform:scaleX(0.95);transform-origin:100% 0;color:#1e1e1e;-webkit-text-stroke:0.12px #1e1e1e">$330,460.86</div>
<div class="t" style="left:327.70px;width:200px;text-align:right;top:450.77px;font-size:9.2px;line-height:9.2px;transform:scaleX(0.95);transform-origin:100% 0;color:#1e1e1e;-webkit-text-stroke:0.12px #1e1e1e">$229.38</div>
<div class="t" style="left:407.60px;width:200px;text-align:right;top:450.77px;font-size:9.2px;line-height:9.2px;transform:scaleX(0.95);transform-origin:100% 0;color:#1e1e1e;-webkit-text-stroke:0.12px #1e1e1e">$55.00</div>
<div class="t" style="left:480.30px;width:200px;text-align:right;top:450.77px;font-size:9.2px;line-height:9.2px;transform:scaleX(0.95);transform-origin:100% 0;color:#1e1e1e;-webkit-text-stroke:0.12px #1e1e1e">$174.38</div>
<div class="abs" style="left:613.4px;top:462.33px;width:6.76px;height:11.17px;background:linear-gradient(90deg,#63be7b,#b5e0c0 70%,#eaf6ed);box-shadow:inset 0 0 0 0.6px #63be7b"></div>
<div class="t" style="left:251.80px;top:464.14px;font-size:9.2px;line-height:9.2px;transform:scaleX(0.95);transform-origin:0 0;color:#1e1e1e;-webkit-text-stroke:0.12px #1e1e1e">Jerrae M. Williams</div>
<div class="t" style="left:247.90px;width:200px;text-align:right;top:464.14px;font-size:9.2px;line-height:9.2px;transform:scaleX(0.95);transform-origin:100% 0;color:#1e1e1e;-webkit-text-stroke:0.12px #1e1e1e">$332,093.29</div>
<div class="t" style="left:327.70px;width:200px;text-align:right;top:464.14px;font-size:9.2px;line-height:9.2px;transform:scaleX(0.95);transform-origin:100% 0;color:#1e1e1e;-webkit-text-stroke:0.12px #1e1e1e">$192.93</div>
<div class="t" style="left:407.60px;width:200px;text-align:right;top:464.14px;font-size:9.2px;line-height:9.2px;transform:scaleX(0.95);transform-origin:100% 0;color:#1e1e1e;-webkit-text-stroke:0.12px #1e1e1e">$55.00</div>
<div class="t" style="left:480.30px;width:200px;text-align:right;top:464.14px;font-size:9.2px;line-height:9.2px;transform:scaleX(0.95);transform-origin:100% 0;color:#1e1e1e;-webkit-text-stroke:0.12px #1e1e1e">$137.93</div>
<div class="abs" style="left:613.4px;top:475.70px;width:6.19px;height:11.17px;background:linear-gradient(90deg,#63be7b,#b5e0c0 70%,#eaf6ed);box-shadow:inset 0 0 0 0.6px #63be7b"></div>
<div class="t" style="left:251.80px;top:477.51px;font-size:9.2px;line-height:9.2px;transform:scaleX(0.95);transform-origin:0 0;color:#1e1e1e;-webkit-text-stroke:0.12px #1e1e1e">Zariel Kogan</div>
<div class="t" style="left:247.90px;width:200px;text-align:right;top:477.51px;font-size:9.2px;line-height:9.2px;transform:scaleX(0.95);transform-origin:100% 0;color:#1e1e1e;-webkit-text-stroke:0.12px #1e1e1e">$285,266.94</div>
<div class="t" style="left:327.70px;width:200px;text-align:right;top:477.51px;font-size:9.2px;line-height:9.2px;transform:scaleX(0.95);transform-origin:100% 0;color:#1e1e1e;-webkit-text-stroke:0.12px #1e1e1e">$170.32</div>
<div class="t" style="left:407.60px;width:200px;text-align:right;top:477.51px;font-size:9.2px;line-height:9.2px;transform:scaleX(0.95);transform-origin:100% 0;color:#1e1e1e;-webkit-text-stroke:0.12px #1e1e1e">$44.00</div>
<div class="t" style="left:480.30px;width:200px;text-align:right;top:477.51px;font-size:9.2px;line-height:9.2px;transform:scaleX(0.95);transform-origin:100% 0;color:#1e1e1e;-webkit-text-stroke:0.12px #1e1e1e">$126.32</div>
<div class="abs" style="left:613.4px;top:489.07px;width:6.02px;height:11.17px;background:linear-gradient(90deg,#63be7b,#b5e0c0 70%,#eaf6ed);box-shadow:inset 0 0 0 0.6px #63be7b"></div>
<div class="t" style="left:251.80px;top:490.88px;font-size:9.2px;line-height:9.2px;transform:scaleX(0.95);transform-origin:0 0;color:#1e1e1e;-webkit-text-stroke:0.12px #1e1e1e">Shelley Seguine</div>
<div class="t" style="left:247.90px;width:200px;text-align:right;top:490.88px;font-size:9.2px;line-height:9.2px;transform:scaleX(0.95);transform-origin:100% 0;color:#1e1e1e;-webkit-text-stroke:0.12px #1e1e1e">$273,449.15</div>
<div class="t" style="left:327.70px;width:200px;text-align:right;top:490.88px;font-size:9.2px;line-height:9.2px;transform:scaleX(0.95);transform-origin:100% 0;color:#1e1e1e;-webkit-text-stroke:0.12px #1e1e1e">$177.81</div>
<div class="t" style="left:407.60px;width:200px;text-align:right;top:490.88px;font-size:9.2px;line-height:9.2px;transform:scaleX(0.95);transform-origin:100% 0;color:#1e1e1e;-webkit-text-stroke:0.12px #1e1e1e">$55.00</div>
<div class="t" style="left:480.30px;width:200px;text-align:right;top:490.88px;font-size:9.2px;line-height:9.2px;transform:scaleX(0.95);transform-origin:100% 0;color:#1e1e1e;-webkit-text-stroke:0.12px #1e1e1e">$122.81</div>
<div class="abs" style="left:201.70px;top:206.60px;width:483.60px;height:1px;background:#1f3b5a"></div>
<div class="abs" style="left:201.70px;top:219.97px;width:483.60px;height:1px;background:#1f3b5a"></div>
<div class="abs" style="left:201.70px;top:233.34px;width:483.60px;height:1px;background:#555555"></div>
<div class="abs" style="left:201.70px;top:246.71px;width:483.60px;height:1px;background:#555555"></div>
<div class="abs" style="left:201.70px;top:260.08px;width:483.60px;height:1px;background:#555555"></div>
<div class="abs" style="left:201.70px;top:273.45px;width:483.60px;height:1px;background:#555555"></div>
<div class="abs" style="left:201.70px;top:286.82px;width:483.60px;height:1px;background:#555555"></div>
<div class="abs" style="left:201.70px;top:300.19px;width:483.60px;height:1px;background:#555555"></div>
<div class="abs" style="left:201.70px;top:313.56px;width:483.60px;height:1px;background:#555555"></div>
<div class="abs" style="left:201.70px;top:326.93px;width:483.60px;height:1px;background:#555555"></div>
<div class="abs" style="left:201.70px;top:340.30px;width:483.60px;height:1px;background:#555555"></div>
<div class="abs" style="left:201.70px;top:353.67px;width:483.60px;height:1px;background:#555555"></div>
<div class="abs" style="left:201.70px;top:367.04px;width:483.60px;height:1px;background:#555555"></div>
<div class="abs" style="left:201.70px;top:380.41px;width:483.60px;height:1px;background:#555555"></div>
<div class="abs" style="left:201.70px;top:393.78px;width:483.60px;height:1px;background:#555555"></div>
<div class="abs" style="left:201.70px;top:407.15px;width:483.60px;height:1px;background:#555555"></div>
<div class="abs" style="left:201.70px;top:420.52px;width:483.60px;height:1px;background:#555555"></div>
<div class="abs" style="left:201.70px;top:433.89px;width:483.60px;height:1px;background:#555555"></div>
<div class="abs" style="left:201.70px;top:447.26px;width:483.60px;height:1px;background:#555555"></div>
<div class="abs" style="left:201.70px;top:460.63px;width:483.60px;height:1px;background:#555555"></div>
<div class="abs" style="left:201.70px;top:474.00px;width:483.60px;height:1px;background:#555555"></div>
<div class="abs" style="left:201.70px;top:487.37px;width:483.60px;height:1px;background:#555555"></div>
<div class="abs" style="left:201.70px;top:500.74px;width:483.60px;height:1px;background:#555555"></div>
<div class="abs" style="left:201.70px;top:206.60px;width:1.1px;height:295.14px;background:#4a4a4a"></div>
<div class="abs" style="left:684.30px;top:206.60px;width:1.1px;height:295.14px;background:#4a4a4a"></div>
<div class="t" style="left:204.10px;top:146.54px;font-size:12px;line-height:12px;color:#4b7dba;font-weight:bold;transform:scaleX(1.01);transform-origin:0 0">Top 10 Profitable Customers by Product and Branch</div>
<div class="abs" style="left:202.2px;top:166.4px;width:67px;height:27.2px;background:#5b9bd5;border:1px solid #1f3b5a"></div>
<div class="abs" style="left:202.2px;top:180px;width:67px;height:1px;background:#1f3b5a"></div>
<div class="t" style="left:204.00px;top:170.52px;font-size:8.25px;line-height:8.25px;color:#fff;font-weight:bold">January</div>
<div class="t" style="left:204.00px;top:184.22px;font-size:8.25px;line-height:8.25px;color:#fff;font-weight:bold">2022</div>
<svg class="abs" style="left:0;top:0" width="950" height="200" viewBox="0 0 950 200"><polygon points="653.2,145.4 668.2,138.8 663.6,146.3" fill="#2b6cb5"/><polygon points="665.3,146.3 668.6,138.8 675.5,146.3" fill="#8dc043"/></svg>
<div class="t" style="left:636.9px;top:147.9px;font-size:11.5px;line-height:11.5px;color:#222;transform:scaleX(1.3);transform-origin:0 0">solver</div>
</div></div>
<div class="abs" style="left:922.4px;top:128.2px;width:10px;height:370.8px;background:#dadada"></div>
<div class="abs" style="left:922.4px;top:129px;width:10px;height:9.5px;background:#fff;border:0.8px solid #d0d0d0"></div>
<div class="abs" style="left:922.8px;top:138.5px;width:9.2px;height:46.3px;background:#fff"></div>
<div class="abs" style="left:922.4px;top:489.5px;width:10px;height:9.3px;background:#fff;border:0.8px solid #d0d0d0"></div>
<div class="abs" style="left:229.4px;top:499px;width:1px;height:16px;background:#c4c4c4"></div>
<div class="abs" style="left:328.4px;top:499px;width:1px;height:16px;background:#c4c4c4"></div>
<div class="abs" style="left:612px;top:499px;width:321px;height:20px;background:#e6e6e6"></div>
<div class="abs" style="left:617.4px;top:504.6px;width:302px;height:9.4px;background:#d8d8d8"></div>
<div class="abs" style="left:617.4px;top:504.6px;width:176px;height:9.4px;background:#fff;border:0.8px solid #d6d6d6"></div>
<div class="abs" style="left:626px;top:504.6px;width:0.8px;height:9.4px;background:#d6d6d6"></div>
<div class="abs" style="left:909.7px;top:504.6px;width:9.6px;height:9.4px;background:#fff;border:0.8px solid #d6d6d6"></div>
<div class="t" style="left:238.20px;top:504.05px;font-size:8.8px;line-height:8.8px;color:#1d6b40;font-weight:bold;transform:scaleX(0.976);transform-origin:0 0">Product and Branch</div>
<svg class="abs" style="left:0;top:0" width="950" height="535" viewBox="0 0 950 535"><polygon points="925.3,135.2 927.4,132.8 929.5,135.2" fill="#444"/><polygon points="925.3,492.8 927.4,495.2 929.5,492.8" fill="#444"/><polygon points="180.8,509.4 183,507.4 183,511.4" fill="#b8b8b8"/><polygon points="201.2,509.4 199,507.4 199,511.4" fill="#b8b8b8"/><polygon points="620.2,509.6 622.6,507.6 622.6,511.6" fill="#444"/><polygon points="915.6,509.6 913.2,507.6 913.2,511.6" fill="#444"/><g fill="#bdbdbd"><rect x="605.8" y="505.6" width="0.9" height="0.9"/><rect x="605.8" y="508" width="0.9" height="0.9"/><rect x="605.8" y="510.4" width="0.9" height="0.9"/><rect x="605.8" y="512.8" width="0.9" height="0.9"/></g></svg>
<!--/SHEET--></div>
</div>
<div id="bord"></div>
</body></html>
